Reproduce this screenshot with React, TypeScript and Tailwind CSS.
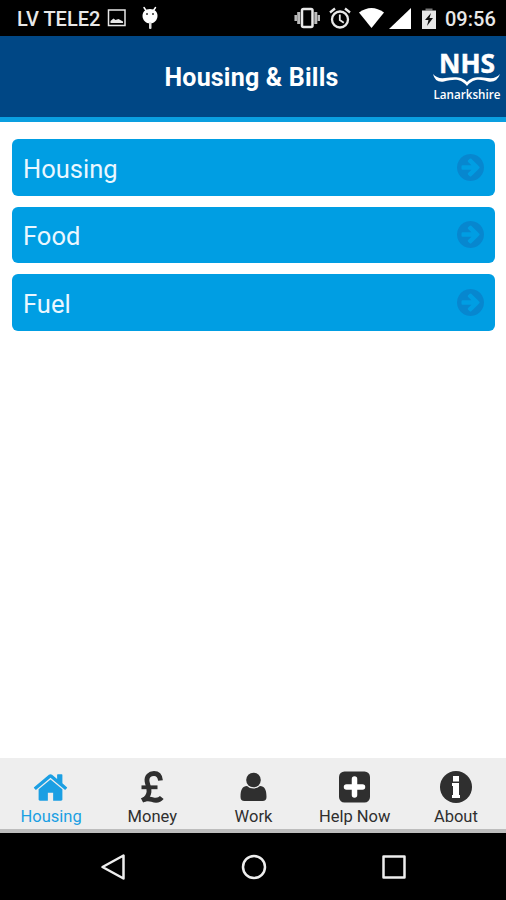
import type { ReactNode } from 'react';

const sections = ['Housing', 'Food', 'Fuel'];

function ArrowIcon() {
  return (
    <svg className="h-[27px] w-[27px] text-[#0787cf]" viewBox="128 0 1536 1536" fill="currentColor">
      <path d="M1413 768q0-27-18-45l-91-91-362-362q-18-18-45-18t-45 18l-91 91q-18 18-18 45t18 45l189 189h-502q-26 0-45 19t-19 45v128q0 26 19 45t45 19h502l-189 189q-19 19-19 45t19 45l91 91q18 18 45 18t45-18l362-362 91-91q18-18 18-45zm251 0q0 209-103 385.5t-279.5 279.5-385.5 103-385.5-103-279.5-279.5-103-385.5 103-385.5 279.5-279.5 385.5-103 385.5 103 279.5 279.5 103 385.5z" />
    </svg>
  );
}

function HomeIcon() {
  return (
    <svg className="h-[37px] w-[37px]" viewBox="0 0 1792 1792" fill="currentColor">
      <path d="M1472 992v480q0 26-19 45t-45 19h-384v-384h-256v384h-384q-26 0-45-19t-19-45v-480q0-1 .5-3t.5-3l575-474 575 474q1 2 1 6zm223-69l-62 74q-8 9-21 11h-3q-13 0-21-7l-692-577-692 577q-12 8-24 7-13-2-21-11l-62-74q-8-10-7-23.5t11-21.5l719-599q32-26 76-26t76 26l244 204v-195q0-14 9-23t23-9h192q14 0 23 9t9 23v408l219 182q10 8 11 21.5t-7 23.5z" />
    </svg>
  );
}

function PoundIcon() {
  return (
    <svg className="h-[34px] w-[26px]" viewBox="0 0 26 34" fill="none" stroke="currentColor" strokeWidth="4.800">
      <path d="M21.500 10.500C21 5.500 18.500 3.500 15 3.500C10.500 3.500 7.500 6.500 8 11C8.500 15 10.500 17.500 10 22C9.500 26 7 28.500 4.500 30" />
      <path d="M2.500 17.300H18.500" strokeWidth="3.800" />
      <path d="M3 30.300C6.500 28.500 10 28.500 13 29.500C17 30.800 20.500 30.300 22.800 27.500" />
    </svg>
  );
}

function UserIcon() {
  return (
    <svg className="h-[34px] w-[34px]" viewBox="0 0 34 34" fill="currentColor">
      <circle cx="17.500" cy="10" r="7.300" />
      <path d="M11 16C6.500 16 4.500 19.500 4.500 27Q4.500 31 8.500 31H26.500Q30.500 31 30.500 27C30.500 19.500 28.500 16 24 16Q21.500 18.600 17.500 18.600T11 16Z" />
    </svg>
  );
}

function PlusSquareIcon() {
  return (
    <svg className="h-[32px] w-[34px]" viewBox="-1 0 34 32">
      <rect x="1" y="0.500" width="31" height="31" rx="5.500" fill="currentColor" />
      <path d="M16.500 8v16M8.500 16h16" stroke="#fff" strokeWidth="5.500" strokeLinecap="round" />
    </svg>
  );
}

function InfoIcon() {
  return (
    <svg className="h-[32px] w-[34px]" viewBox="-1 0 34 32">
      <circle cx="17" cy="16" r="16" fill="currentColor" />
      <path d="M14 5h6v5.500h-6zM13 12h7v12h1v3h-8v-3h1v-9h-1z" fill="#fff" />
    </svg>
  );
}

function NhsLogo() {
  return (
    <svg className="h-16 w-[72px]" viewBox="0 -8 72 64" fill="#fff">
      <text
        x="36"
        y="20"
        textAnchor="middle"
        textLength="56"
        lengthAdjust="spacingAndGlyphs"
        className="font-['Open_Sans',sans-serif] text-[27px] font-bold"
        stroke="#fff"
        strokeWidth="0.500"
      >
        NHS
      </text>
      <path d="M2 21Q4 30 13 28.500C22 26.500 29 24.500 36 33C43 24.500 50 26.500 57 28.500Q66 30 69 21Q65 26 57 25C47 23.500 41 23.500 36 29C31 23.500 24 23.500 14 25Q6 26 2 21Z" />
      <text
        x="36"
        y="46"
        textAnchor="middle"
        textLength="67"
        lengthAdjust="spacingAndGlyphs"
        className="font-['Open_Sans',sans-serif] text-[12px] font-semibold"
      >
        Lanarkshire
      </text>
    </svg>
  );
}

function StatusBar() {
  return (
    <div className="flex h-9 items-center justify-between bg-black pr-[11px] pl-[17px] text-[20px] font-medium text-[#e8e8e8]">
      <div className="flex items-center">
        <span className="w-[83px] pt-[2px] whitespace-nowrap">LV TELE2</span>
        <svg className="ml-[7px] h-5 w-5" viewBox="0 0 20 20">
          <rect x="1.500" y="2" width="16.500" height="15.500" fill="none" stroke="currentColor" strokeWidth="1.500" />
          <path d="M3.500 15v-2l3-2.500 2 1.500 3-1 4.500 2.500v1.500z" fill="currentColor" />
        </svg>
        <svg className="ml-[14px] h-6 w-[18px]" viewBox="0 0 18 24">
          <path d="M3 1.500l2 3M14.500 1.500l-2 3" stroke="#fff" strokeWidth="1.500" strokeLinecap="round" />
          <path d="M9 3C4 3 1.500 6 1.500 10S5 17.500 9 17.500s7.500-3.500 7.500-7.500S14 3 9 3z" fill="#fff" />
          <circle cx="6" cy="8" r="1" fill="#333" />
          <circle cx="12" cy="8" r="1" fill="#333" />
          <rect x="8" y="16" width="2.500" height="7" rx="1" fill="#ddd" />
        </svg>
      </div>
      <div className="flex items-center">
        <svg className="h-6 w-[26px]" viewBox="0 0 26 24">
          <rect x="8" y="3" width="10.500" height="18" rx="1.500" fill="none" stroke="currentColor" strokeWidth="2.500" />
          <path d="M4.700 6v12M21.800 6v12" stroke="#bbb" strokeWidth="3" />
          <path d="M1.700 9v6M24.800 9v6" stroke="#bbb" strokeWidth="2.500" />
        </svg>
        <svg className="ml-[9px] h-[22px] w-[22px]" viewBox="0 0 22 22" fill="none" stroke="currentColor">
          <circle cx="11" cy="12.500" r="8" strokeWidth="2.300" />
          <path d="M1 5.500L6 1.500M21 5.500L16 1.500" strokeWidth="2.300" />
          <path d="M10.800 7.500v5.500l4 2.700" strokeWidth="1.800" />
        </svg>
        <svg className="ml-[8px] h-5 w-[25px]" viewBox="0 0 25 20">
          <path d="M0 4.500Q12.500-4.500 25 4.500L12.500 20z" fill="#fff" />
        </svg>
        <svg className="ml-[5px] h-[21px] w-[22px]" viewBox="0 0 22 21">
          <path d="M22 0v21H0z" fill="#fff" />
        </svg>
        <svg className="ml-[11px] h-[21px] w-[14px]" viewBox="0 0 14 21">
          <path d="M3.500.5h7v2h-7z" fill="#777" />
          <path d="M0 2.500H14V21H0z" fill="currentColor" />
          <path d="M9 5L3 12h3.500L5 18l6-8H7.500z" fill="#111" />
        </svg>
        <span className="ml-[9px] w-[50px] pt-[2px] whitespace-nowrap">09:56</span>
      </div>
    </div>
  );
}

function Tab({ label, active, children }: { label: string; active?: boolean; children: ReactNode }) {
  return (
    <div className={`flex flex-col items-center ${active ? 'text-[#1b9fe3]' : 'text-[#2f2f2f]'}`}>
      <div className="flex h-[38px] items-center justify-center">{children}</div>
      <span className="pt-px pl-px text-[16.500px] leading-5 whitespace-nowrap">{label}</span>
    </div>
  );
}

export default function App() {
  return (
    <div className="flex h-[900px] w-[506px] flex-col overflow-hidden bg-white font-[Roboto,sans-serif]">
      <StatusBar />

      <header className="grid h-[86px] grid-cols-[72px_1fr_72px] items-center border-b-[5px] border-[#0a9fe0] bg-[#004785] pr-[3px]">
        <h1 className="col-start-2 pt-[3px] text-center text-[25px] font-bold tracking-[0.200px] text-white">
          Housing &amp; Bills
        </h1>
        <NhsLogo />
      </header>

      <main className="flex flex-1 flex-col gap-[11px] px-3 pt-[17px]">
        {sections.map((section) => (
          <button
            key={section}
            className="mr-[-1px] flex h-[56.500px] shrink-0 items-center justify-between rounded-md bg-[#009ee3] pr-[11px] pl-[11px] text-left text-[25.500px] text-[#eaf7ff]"
          >
            <span className="pt-[3px]">{section}</span>
            <ArrowIcon />
          </button>
        ))}
      </main>

      <nav className="grid h-[75px] grid-cols-5 border-b-[4px] border-[#bdbdbd] bg-[#eeeeee] pt-[10px]">
        <Tab label="Housing" active>
          <HomeIcon />
        </Tab>
        <Tab label="Money">
          <PoundIcon />
        </Tab>
        <Tab label="Work">
          <UserIcon />
        </Tab>
        <Tab label="Help Now">
          <PlusSquareIcon />
        </Tab>
        <Tab label="About">
          <InfoIcon />
        </Tab>
      </nav>

      <div className="flex h-[67px] items-center justify-between bg-black px-[100px]">
        <svg className="h-[28px] w-[26px]" viewBox="0 0 26 28" fill="none" stroke="#eee" strokeWidth="2.500" strokeLinejoin="round">
          <path d="M23.500 2.500v23L2.500 14z" />
        </svg>
        <svg className="h-[26px] w-[26px]" viewBox="0 0 26 26" fill="none" stroke="#eee" strokeWidth="2.500">
          <circle cx="13" cy="13" r="11" />
        </svg>
        <svg className="h-[24px] w-[24px]" viewBox="0 0 24 24" fill="none" stroke="#eee" strokeWidth="2.500" strokeLinejoin="round">
          <rect x="1.500" y="1.500" width="21" height="21" />
        </svg>
      </div>
    </div>
  );
}
